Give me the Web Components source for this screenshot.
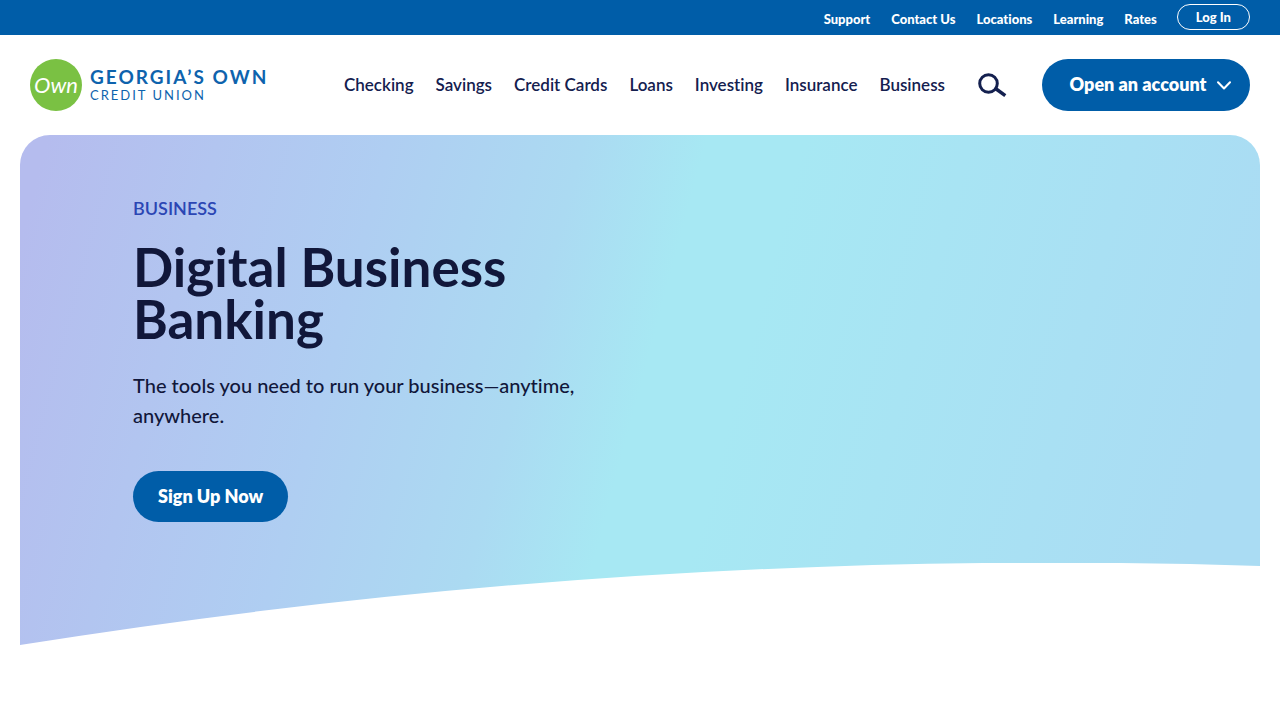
<!DOCTYPE html>
<html lang="en">
<head>
<meta charset="utf-8">
<meta name="viewport" content="width=device-width, initial-scale=1">
<title>Digital Business Banking | Georgia's Own Credit Union</title>
<style>
  body { margin: 0; background: #fff; color: #11173a; font-family: Lato, "Open Sans", sans-serif; font-variant-ligatures: none; --blue: #005da8; --navy: #14204f; }
</style>
</head>
<body>
<utility-bar>
  <utility-link href="#support">Support</utility-link>
  <utility-link href="#contact">Contact Us</utility-link>
  <utility-link href="#locations">Locations</utility-link>
  <utility-link href="#learning">Learning</utility-link>
  <utility-link href="#rates">Rates</utility-link>
</utility-bar>
<site-header>
  <brand-logo slot="logo"></brand-logo>
  <nav-link href="#checking">Checking</nav-link>
  <nav-link href="#savings">Savings</nav-link>
  <nav-link href="#cards">Credit Cards</nav-link>
  <nav-link href="#loans">Loans</nav-link>
  <nav-link href="#investing">Investing</nav-link>
  <nav-link href="#insurance">Insurance</nav-link>
  <nav-link href="#business">Business</nav-link>
</site-header>
<main>
  <hero-banner>
    <span slot="eyebrow">BUSINESS</span>
    <span slot="title">Digital Business Banking</span>
    <span slot="text">The tools you need to run your business—anytime, anywhere.</span>
    <span slot="action">Sign Up Now</span>
  </hero-banner>
</main>
<script>
  const define = (name, markup, setup) => customElements.define(name, class extends HTMLElement {
    connectedCallback() {
      if (this.shadowRoot) return;
      this.attachShadow({ mode: "open" }).innerHTML = markup;
      if (setup) setup(this);
    }
  });
  const passHref = el => el.shadowRoot.querySelector("a").setAttribute("href", el.getAttribute("href"));

  define("utility-link", `
    <style>
      :host { display: block; }
      a { display: block; color: #fff; text-decoration: none; font-size: 13px; line-height: 16px; font-weight: 900; white-space: nowrap; }
    </style>
    <a><slot></slot></a>`, passHref);

  define("utility-bar", `
    <style>
      :host { display: block; background: var(--blue); }
      nav { display: flex; justify-content: flex-end; align-items: center; gap: 20px; padding: 4px 30px 5px; }
      .links { display: flex; gap: 21px; padding-top: 4px; }
      button { box-sizing: border-box; height: 26px; padding: 0 18px; border: 1px solid #fff; border-radius: 13px; background: none; color: #fff; font: 900 13px/16px Lato, sans-serif; }
    </style>
    <nav aria-label="Utility"><div class="links"><slot></slot></div><button type="button">Log In</button></nav>`);

  define("brand-logo", `
    <style>
      :host { display: block; }
      a { display: flex; align-items: center; gap: 8px; color: #0e63ad; text-decoration: none; white-space: nowrap; }
      .mark { display: grid; place-items: center; width: 52px; height: 52px; border-radius: 50%; background: #7ac143; color: #fff; font: italic 400 22px/24px Lato, cursive; }
      .name { display: block; font-size: 19px; line-height: 20px; font-weight: 700; letter-spacing: 2px; }
      .sub { display: block; font-size: 13px; line-height: 16px; letter-spacing: 2px; }
    </style>
    <a href="#home"><span class="mark">Own</span><span><span class="name">GEORGIA’S OWN</span><span class="sub">CREDIT UNION</span></span></a>`);

  define("nav-link", `
    <style>
      :host { display: block; }
      a { display: block; color: var(--navy); text-decoration: none; font-size: 17px; line-height: 24px; font-weight: 600; white-space: nowrap; }
    </style>
    <a><slot></slot></a>`, passHref);

  define("site-header", `
    <style>
      :host { display: block; }
      header { display: flex; align-items: center; padding: 24px 30px; }
      nav { display: flex; gap: 22px; margin-left: auto; }
      button { border: 0; padding: 0; background: none; }
      .search { display: flex; margin: 0 35px 0 33px; }
      .open { display: flex; align-items: center; justify-content: center; gap: 10px; box-sizing: border-box; width: 208px; height: 52px; padding: 0 0 2px 8px; border-radius: 26px; background: var(--blue); color: #fff; font: 800 18px/24px Lato, sans-serif; white-space: nowrap; }
      .open svg { margin-top: 2px; }
    </style>
    <header>
      <slot name="logo"></slot>
      <nav aria-label="Main"><slot></slot></nav>
      <button class="search" type="button" aria-label="Search">
        <svg width="29" height="25" viewBox="0 0 29 25" fill="none" stroke="#14204f"><circle cx="10.5" cy="10.5" r="8.8" stroke-width="3"/><path d="M17.5 15.5 27.3 22.7" stroke-width="3.5"/></svg>
      </button>
      <button class="open" type="button">Open an account
        <svg width="14" height="9" viewBox="0 0 14 9" fill="none" stroke="#fff" stroke-width="2" stroke-linecap="round" stroke-linejoin="round"><path d="M1 1.2 7 7.5 13 1.2"/></svg>
      </button>
    </header>`);

  define("hero-banner", `
    <style>
      :host { display: block; margin: 0 20px; }
      section { border-radius: 30px 30px 0 0; background: linear-gradient(105deg, #b5bcee 2%, #afcef2 27%, #abdaf2 41%, #a7e8f3 50%, #a7e8f3 57%, #aadcf3 93%); }
      .copy { max-width: 480px; padding: 61px 113px 41px; }
      p, h1 { margin: 0; }
      .eyebrow { color: #2b46b4; font-size: 18px; line-height: 24px; font-weight: 600; }
      h1 { margin-top: 21px; font-size: 53px; line-height: 52px; font-weight: 700; }
      .text { margin-top: 25px; font-size: 20px; line-height: 30px; font-weight: 500; }
      a { display: inline-flex; align-items: center; box-sizing: border-box; margin-top: 41px; height: 51px; padding: 0 25px 2px; border-radius: 26px; background: var(--blue); color: #fff; font-size: 18px; line-height: 24px; font-weight: 800; text-decoration: none; vertical-align: top; }
      svg { display: block; width: 100%; height: 82px; }
    </style>
    <section>
      <div class="copy">
        <p class="eyebrow"><slot name="eyebrow"></slot></p>
        <h1><slot name="title"></slot></h1>
        <p class="text"><slot name="text"></slot></p>
        <a href="#signup"><slot name="action"></slot></a>
      </div>
      <svg viewBox="0 0 1240 82" preserveAspectRatio="none" aria-hidden="true"><path d="M0 82Q620-17 1240 3V84H0Z" fill="#fff"/></svg>
    </section>`);
</script>
</body>
</html>
